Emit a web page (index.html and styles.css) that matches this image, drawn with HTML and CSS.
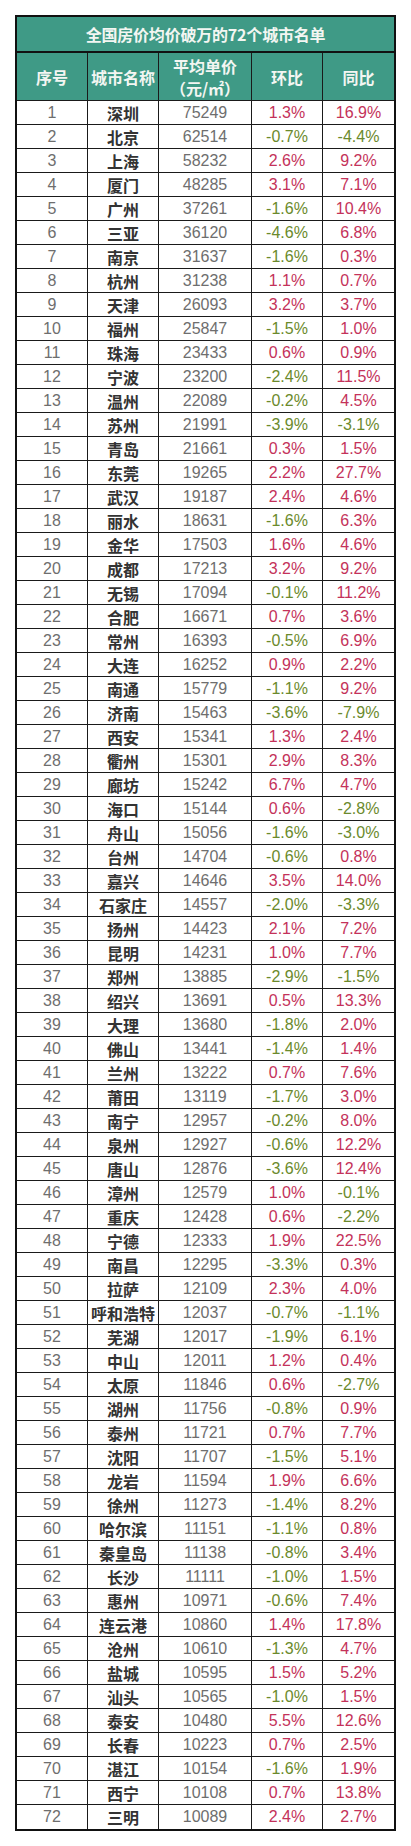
FILE: index.html
```html
<!DOCTYPE html>
<html lang="zh-CN">
<head>
<meta charset="utf-8">
<title>全国房价均价破万的72个城市名单</title>
<link rel="stylesheet" href="styles.css">
</head>
<body>
<div class="page">
<table class="list">
<colgroup><col class="c1"><col class="c2"><col class="c3"><col class="c4"><col class="c5"></colgroup>
<thead>
<tr><th colspan="5" class="title">全国房价均价破万的72个城市名单</th></tr>
<tr class="head"><th>序号</th><th>城市名称</th><th>平均单价<br>（元/㎡）</th><th>环比</th><th>同比</th></tr>
</thead>
<tbody id="rows"></tbody>
</table>
</div>
<script src="app.js"></script>
</body>
</html>
```
FILE: app.js
```js
const data = `深圳 75249 1.3% 16.9%
北京 62514 -0.7% -4.4%
上海 58232 2.6% 9.2%
厦门 48285 3.1% 7.1%
广州 37261 -1.6% 10.4%
三亚 36120 -4.6% 6.8%
南京 31637 -1.6% 0.3%
杭州 31238 1.1% 0.7%
天津 26093 3.2% 3.7%
福州 25847 -1.5% 1.0%
珠海 23433 0.6% 0.9%
宁波 23200 -2.4% 11.5%
温州 22089 -0.2% 4.5%
苏州 21991 -3.9% -3.1%
青岛 21661 0.3% 1.5%
东莞 19265 2.2% 27.7%
武汉 19187 2.4% 4.6%
丽水 18631 -1.6% 6.3%
金华 17503 1.6% 4.6%
成都 17213 3.2% 9.2%
无锡 17094 -0.1% 11.2%
合肥 16671 0.7% 3.6%
常州 16393 -0.5% 6.9%
大连 16252 0.9% 2.2%
南通 15779 -1.1% 9.2%
济南 15463 -3.6% -7.9%
西安 15341 1.3% 2.4%
衢州 15301 2.9% 8.3%
廊坊 15242 6.7% 4.7%
海口 15144 0.6% -2.8%
舟山 15056 -1.6% -3.0%
台州 14704 -0.6% 0.8%
嘉兴 14646 3.5% 14.0%
石家庄 14557 -2.0% -3.3%
扬州 14423 2.1% 7.2%
昆明 14231 1.0% 7.7%
郑州 13885 -2.9% -1.5%
绍兴 13691 0.5% 13.3%
大理 13680 -1.8% 2.0%
佛山 13441 -1.4% 1.4%
兰州 13222 0.7% 7.6%
莆田 13119 -1.7% 3.0%
南宁 12957 -0.2% 8.0%
泉州 12927 -0.6% 12.2%
唐山 12876 -3.6% 12.4%
漳州 12579 1.0% -0.1%
重庆 12428 0.6% -2.2%
宁德 12333 1.9% 22.5%
南昌 12295 -3.3% 0.3%
拉萨 12109 2.3% 4.0%
呼和浩特 12037 -0.7% -1.1%
芜湖 12017 -1.9% 6.1%
中山 12011 1.2% 0.4%
太原 11846 0.6% -2.7%
湖州 11756 -0.8% 0.9%
泰州 11721 0.7% 7.7%
沈阳 11707 -1.5% 5.1%
龙岩 11594 1.9% 6.6%
徐州 11273 -1.4% 8.2%
哈尔滨 11151 -1.1% 0.8%
秦皇岛 11138 -0.8% 3.4%
长沙 11111 -1.0% 1.5%
惠州 10971 -0.6% 7.4%
连云港 10860 1.4% 17.8%
沧州 10610 -1.3% 4.7%
盐城 10595 1.5% 5.2%
汕头 10565 -1.0% 1.5%
泰安 10480 5.5% 12.6%
长春 10223 0.7% 2.5%
湛江 10154 -1.6% 1.9%
西宁 10108 0.7% 13.8%
三明 10089 2.4% 2.7%`;

const tbody = document.getElementById('rows');
data.split('\n').forEach((line, i) => {
  const [city, price, mom, yoy] = line.trim().split(/\s+/);
  const tr = document.createElement('tr');
  const cls = v => (v.startsWith('-') ? 'down' : 'up');
  tr.innerHTML =
    `<td class="idx">${i + 1}</td>` +
    `<td class="city">${city}</td>` +
    `<td class="price">${price}</td>` +
    `<td class="pct ${cls(mom)}">${mom}</td>` +
    `<td class="pct ${cls(yoy)}">${yoy}</td>`;
  tbody.appendChild(tr);
});
```
FILE: styles.css
```css
html, body {
  margin: 0;
  padding: 0;
  background: #ffffff;
}

.page {
  padding: 15px 15px 16px 15px;
}

.list {
  width: 381px;
  table-layout: fixed;
  border-collapse: separate;
  border-spacing: 0;
  border: 2px solid #111;
  font-family: "Liberation Sans", Arial, "Noto Sans CJK SC", sans-serif;
}

.c1 { width: 71px; }
.c2 { width: 71px; }
.c3 { width: 93px; }
.c4 { width: 71px; }
.c5 { width: 71px; }

.list th,
.list td {
  box-sizing: border-box;
  padding: 0;
  text-align: center;
  vertical-align: middle;
  border-right: 1px solid #1a1a1a;
  border-bottom: 1px solid #1a1a1a;
}

.list th:last-child,
.list td:last-child {
  border-right: none;
}

.list tbody tr:last-child td {
  border-bottom: none;
}

.title {
  height: 36px;
  background: #3f9a86;
  color: #f3f6f2;
  font-family: "Noto Sans CJK SC", sans-serif;
  font-weight: 700;
  font-size: 16px;
  border-bottom: 2px solid #111 !important;
  letter-spacing: -0.2px;
}

.head th {
  height: 48px;
  background: #3f9a86;
  color: #f3f6f2;
  font-family: "Noto Sans CJK SC", sans-serif;
  font-weight: 700;
  font-size: 16px;
  line-height: 22px;
}

.list td {
  height: 24px;
  font-size: 16px;
  line-height: 22px;
  background: #fff;
}

.idx,
.price {
  color: #6e6e6e;
}

.city {
  font-family: "Noto Sans CJK SC", sans-serif;
  font-weight: 700;
  color: #333;
  font-size: 16px;
}

.pct {
  font-size: 15.5px;
}

.up {
  color: #c4325a;
}

.down {
  color: #6b8a2c;
}
```
